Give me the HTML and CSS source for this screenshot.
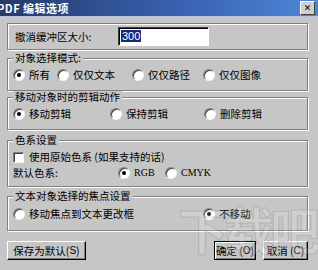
FILE: index.html
```html
<!DOCTYPE html>
<html>

<head>
	<title>PDF 编辑选项</title>
	<meta charset="utf-8">
	<link rel="stylesheet" href="styles.css">
</head>

<body>
	<div class="titlebar">
		<span class="title">PDF 编辑选项</span>
		<span class="close">&#x2715;</span>
	</div>

	<div class="dialog">
		<div class="panel undo">
			<label for="undo">撤消缓冲区大小:</label>
			<div class="edit"><span class="sel">300</span></div>
		</div>

		<fieldset class="group g-select">
			<legend>对象选择模式:</legend>
			<div class="row cols-select">
				<span class="opt"><span class="radio on"></span>所有</span>
				<span class="opt"><span class="radio"></span>仅仅文本</span>
				<span class="opt"><span class="radio"></span>仅仅路径</span>
				<span class="opt"><span class="radio"></span>仅仅图像</span>
			</div>
		</fieldset>

		<fieldset class="group g-move">
			<legend>移动对象时的剪辑动作</legend>
			<div class="row cols-move">
				<span class="opt"><span class="radio on"></span>移动剪辑</span>
				<span class="opt"><span class="radio"></span>保持剪辑</span>
				<span class="opt"><span class="radio"></span>删除剪辑</span>
			</div>
		</fieldset>

		<fieldset class="group g-color">
			<legend>色系设置</legend>
			<div class="row">
				<span class="opt"><span class="check"></span>使用原始色系 (如果支持的话)</span>
			</div>
			<div class="row cols-color">
				<span>默认色系:</span>
				<span class="opt latin"><span class="radio on"></span>RGB</span>
				<span class="opt latin"><span class="radio"></span>CMYK</span>
			</div>
		</fieldset>

		<fieldset class="group g-focus">
			<legend>文本对象选择的焦点设置</legend>
			<div class="row cols-focus">
				<span class="opt"><span class="radio"></span>移动焦点到文本更改框</span>
				<span class="opt"><span class="radio on"></span>不移动</span>
			</div>
		</fieldset>

		<div class="buttons">
			<span class="button save">保存为默认(<u>S</u>)</span>
			<span class="spacer"></span>
			<span class="button default">确定 (<u>O</u>)</span>
			<span class="button cancel">取消 (<u>C</u>)</span>
		</div>
	</div>

	<div class="watermark">下载吧</div>
</body>

</html>
```

FILE: styles.css
```css
html {
	overflow: hidden;
}

body {
	margin: 0;
	width: 318px;
	height: 270px;
	overflow: hidden;
	position: relative;
	background-color: #c6c6c6;
	font-family: "Noto Sans CJK SC", sans-serif;
	font-size: 10.5px;
	line-height: 14px;
	color: #000;
}

.titlebar {
	height: 17px;
	display: flex;
	align-items: center;
	justify-content: space-between;
	background: linear-gradient(to right, #253a6c, #3a64b4 60%, #4f86d6);
	border-bottom: 1px solid #b8c4dc;
	box-sizing: border-box;
}

.title {
	margin-left: -3px;
	color: #fff;
	font-weight: bold;
	font-size: 11px;
	letter-spacing: 0.5px;
}

.close {
	width: 13px;
	height: 12px;
	margin-right: 3px;
	background-color: #d0d0d0;
	border: 1px solid;
	border-color: #fff #404040 #404040 #fff;
	font-size: 9px;
	line-height: 12px;
	text-align: center;
	font-weight: bold;
	font-family: "DejaVu Sans", sans-serif;
}

.dialog {
	padding: 6px 10px 0 7px;
}

.panel,
.group {
	border: 1px solid #808080;
	box-shadow: inset 1px 1px 0 #fff, 1px 1px 0 #fff;
}

.panel {
	height: 27px;
	box-sizing: border-box;
	display: flex;
	align-items: center;
	padding-left: 7px;
}

.panel label {
	width: 103px;
}

.edit {
	width: 91px;
	height: 19px;
	box-sizing: border-box;
	background-color: #fff;
	border: 1px solid;
	border-color: #404040 #fff #fff #404040;
	box-shadow: inset 1px 1px 0 #000;
	padding: 2px 0 0 2px;
	font-family: "Liberation Sans", sans-serif;
	font-size: 11px;
	line-height: 13px;
}

.sel {
	background-color: #1a2a7a;
	color: #fff;
	padding: 0 1px;
}

.group {
	margin: 2px 0 0 0;
	padding: 4px 5px 8px;
}

.group legend {
	padding: 0 2px;
	line-height: 12px;
	background-color: #c6c6c6;
}

.g-move {
	margin-top: 0;
}

.g-color {
	margin-top: 4px;
	padding-bottom: 6px;
}

.g-focus {
	margin-top: 3px;
	padding-top: 5px;
	padding-bottom: 9px;
}

.row {
	display: grid;
	height: 14px;
	align-items: center;
}

.row + .row {
	margin-top: 2px;
}

.cols-select {
	grid-template-columns: 44px 75px 71px auto;
}

.cols-move {
	grid-template-columns: 97px 94px auto;
}

.cols-color {
	grid-template-columns: 105px 47px auto;
}

.cols-focus {
	grid-template-columns: 190px auto;
}

.opt {
	display: flex;
	align-items: center;
	white-space: nowrap;
}

.latin {
	font-family: "Liberation Serif", serif;
	font-size: 10px;
}

.radio {
	position: relative;
	width: 12px;
	height: 12px;
	box-sizing: border-box;
	border-radius: 50%;
	background-color: #fff;
	border: 1px solid;
	border-color: #808080 #f4f4f4 #f4f4f4 #808080;
	box-shadow: inset 1px 1px 0 #404040;
	margin-right: 4px;
	flex: none;
}

.radio.on::after {
	content: "";
	position: absolute;
	left: 3px;
	top: 3px;
	width: 4px;
	height: 4px;
	border-radius: 50%;
	background-color: #000;
}

.check {
	width: 11px;
	height: 11px;
	box-sizing: border-box;
	background-color: #fff;
	border: 1px solid;
	border-color: #808080 #f4f4f4 #f4f4f4 #808080;
	box-shadow: inset 1px 1px 0 #404040;
	margin-right: 5px;
	flex: none;
}

.buttons {
	display: flex;
	margin-top: 10px;
	gap: 7px;
}

.spacer {
	flex: 1;
}

.button {
	height: 19px;
	box-sizing: border-box;
	display: flex;
	align-items: center;
	justify-content: center;
	background-color: #c6c6c6;
	border: 1px solid;
	border-color: #fff #000 #000 #fff;
	box-shadow: inset -1px -1px 0 #808080;
	white-space: nowrap;
}

.button u {
	text-decoration: none;
	font-family: "Liberation Sans", sans-serif;
	font-size: 10px;
}

.save {
	width: 79px;
}

.default {
	width: 42px;
	border: 1px solid #000;
	box-shadow: inset 1px 1px 0 #fff, inset -1px -1px 0 #808080;
}

.cancel {
	width: 45px;
}

.watermark {
	position: absolute;
	left: 178px;
	top: 200px;
	font-size: 50px;
	line-height: 56px;
	font-weight: bold;
	letter-spacing: -4px;
	color: rgba(255, 255, 255, 0.16);
	-webkit-text-stroke: 1px rgba(110, 110, 110, 0.25);
	pointer-events: none;
}
```
